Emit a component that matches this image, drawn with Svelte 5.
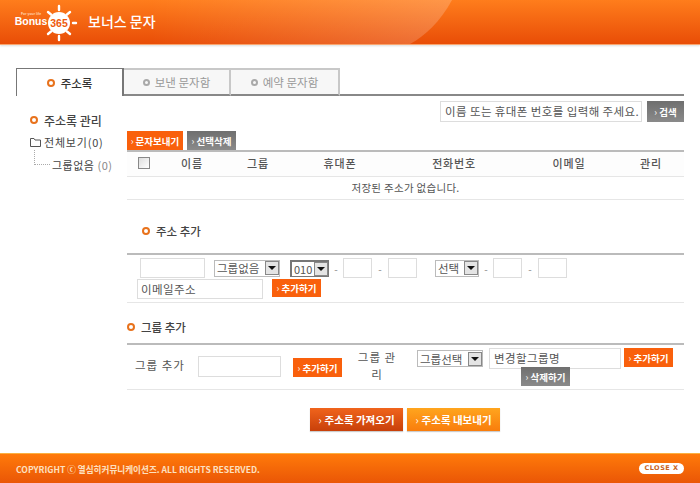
<script>
  const tabs = ['주소록', '보낸 문자함', '예약 문자함'];
  const cols = ['이름', '그룹', '휴대폰', '전화번호', '이메일', '관리'];
</script>

<div class="page">
  <header class="top">
    <svg class="glow" width="460" height="44" viewBox="0 0 460 44">
      <defs>
        <linearGradient id="gl" x1="0" x2="1" y1="0" y2="0">
          <stop offset="0" stop-color="#fff" stop-opacity="0" />
          <stop offset="1" stop-color="#fff" stop-opacity=".2" />
        </linearGradient>
      </defs>
      <path d="M150 0H452C440 22 425 36 410 44H150Z" fill="url(#gl)" />
    </svg>
    <svg class="logo" width="78" height="44" viewBox="0 -1 78 44">
      <g stroke="#fff" stroke-width="2.4" stroke-linecap="round">
        <line x1="59" y1="5" x2="59" y2="9" />
        <line x1="59" y1="35" x2="59" y2="39" />
        <line x1="48" y1="11" x2="51" y2="13.5" />
        <line x1="70" y1="11" x2="67" y2="13.5" />
        <line x1="48" y1="33" x2="51" y2="30.5" />
        <line x1="70" y1="33" x2="67" y2="30.5" />
        <line x1="73" y1="22" x2="76" y2="22" />
      </g>
      <circle cx="59" cy="22" r="11" fill="#fff" />
      <text x="59" y="26" text-anchor="middle" class="l365">365</text>
      <text x="31" y="13.5" text-anchor="middle" class="lfor">For your life</text>
      <text x="31" y="23.5" text-anchor="middle" class="lbonus">Bonus</text>
    </svg>
    <h1>보너스 문자</h1>
  </header>

  <div class="content">
    <nav class="tabs">
      {#each tabs as t, i}
        <div class="tab" class:on={i === 0}><i class="dot"></i>{t}</div>
      {/each}
      <div class="tabline"></div>
    </nav>

    <div class="cols">
      <aside class="side">
        <div class="side-title"><i class="dot"></i>주소록 관리</div>
        <div class="tree-all">
          <svg width="11" height="10" viewBox="0 0 11 10"><path d="M.5 9.5V1.5h3.5l1 1.5h5.500v6.500z" fill="#fff" stroke="#555" /></svg>
          전체보기(0)
        </div>
        <div class="tree-sub"><span class="elbow"></span>그룹없음 <em>(0)</em></div>
      </aside>

      <main class="main">
        <div class="search">
          <div class="input search-in">이름 또는 휴대폰 번호를 입력해 주세요.</div>
          <button class="btn gray search-btn">검색</button>
        </div>

        <div class="actions">
          <button class="btn orange wide">문자보내기</button>
          <button class="btn gray">선택삭제</button>
        </div>

        <div class="list">
          <div class="list-head">
            <span class="chk"></span>
            {#each cols as c}<span>{c}</span>{/each}
          </div>
          <div class="empty">저장된 주소가 없습니다.</div>
        </div>

        <h2 class="sec sec-addr"><i class="dot"></i>주소 추가</h2>
        <div class="addr">
          <div class="addr-row">
            <div class="input name"></div>
            <div class="sel s-group">그룹없음<b></b></div>
            <div class="sel s-010 dark">010<b></b></div>
            <span class="dash">-</span>
            <div class="input num"></div>
            <span class="dash long">-</span>
            <div class="input num"></div>
            <div class="sel s-pick">선택<b></b></div>
            <span class="dash">-</span>
            <div class="input num"></div>
            <span class="dash long">-</span>
            <div class="input num"></div>
          </div>
          <div class="addr-row second">
            <div class="input email">이메일주소</div>
            <button class="btn orange">추가하기</button>
          </div>
        </div>

        <h2 class="sec sec-group"><i class="dot"></i>그룹 추가</h2>
        <div class="group">
          <span class="g-label">그룹 추가</span>
          <div class="input g-name"></div>
          <button class="btn orange g-add">추가하기</button>
          <span class="g-label2">그룹 관리</span>
          <div class="sel s-gsel">그룹선택<b></b></div>
          <div class="g-edit">
            <div class="input g-rename">변경할그룹명</div>
            <button class="btn orange g-add2">추가하기</button>
            <button class="btn gray g-del">삭제하기</button>
          </div>
        </div>

        <div class="bottom">
          <button class="big red">주소록 가져오기</button>
          <button class="big amber">주소록 내보내기</button>
        </div>
      </main>
    </div>
  </div>

  <footer class="foot">
    <span>COPYRIGHT ⓒ 열심히커뮤니케이션즈. ALL RIGHTS RESERVED.</span>
    <button class="close">CLOSE X</button>
  </footer>
</div>

<style>
  :global(body) { margin: 0; background: #fff; }
  .page {
    width: 700px; height: 483px; overflow: hidden;
    display: flex; flex-direction: column;
    font-family: "Noto Sans CJK KR", "Noto Sans", sans-serif;
    font-size: 11px; color: #555;
  }
  button { font-family: inherit; border: 0; padding: 0; cursor: pointer; }

  .top {
    position: relative; overflow: hidden; flex: none;
    height: 45px; display: flex; align-items: center;
    background: linear-gradient(#ff7d1c, #e94d07);
    border-bottom: 1px solid #f9a56e;
    box-shadow: 0 1px 2px #ddd;
    box-sizing: border-box;
  }
  .glow { position: absolute; left: 0; top: 0; }
  .logo { position: relative; flex: none; margin-right: 10px; }
  .l365 { font: 700 10.500px "Liberation Sans", sans-serif; fill: #ee5a0c; }
  .lfor { font: 700 3.500px "Liberation Sans", sans-serif; fill: #ffd7b5; }
  .lbonus { font: 700 10.500px "Liberation Sans", sans-serif; fill: #fff; }
  h1 { position: relative; margin: 0 0 2px; font-size: 14px; font-weight: 500; color: #fff; }

  .content { flex: 1; padding: 23px 16px 0; }
  .tabs { display: flex; height: 28px; }
  .tab {
    width: 107px; box-sizing: border-box; height: 28px; flex: none;
    display: flex; align-items: center; justify-content: center;
    background: #f7f7f7; border: 2px solid #c8c8c8; border-bottom: 2px solid #888; border-left-width: 0;
    color: #999; font-size: 11.500px;
  }
  .tab:nth-child(3) { width: 109px; }
  .tab .dot { border-color: #a9a9a9; width: 3px; height: 3px; margin-right: 5px; }
  .tab.on {
    width: 108px; background: #fff; color: #333; font-weight: 500;
    border: 1px solid #777; border-width: 1px 2px 0 1px;
  }
  .tab.on .dot { border-color: #e8721c; width: 4px; height: 4px; margin-right: 6px; }
  .tabline { flex: 1; border-bottom: 2px solid #888; }

  .dot {
    display: inline-block; box-sizing: content-box; width: 4px; height: 4px;
    border: 2px solid #e8721c; border-radius: 50%; margin-right: 6px; flex: none;
  }

  .cols { display: flex; }
  .side { width: 110px; flex: none; color: #444; }
  .side-title { margin: 15px 0 0 14px; display: flex; align-items: center; font-size: 12px; font-weight: 500; color: #444; height: 18px; }
  .tree-all { margin: 5px 0 0 14px; display: flex; align-items: center; gap: 3px; font-size: 11px; letter-spacing: .8px; height: 16px; }
  .tree-sub { position: relative; margin: 7px 0 0 36px; font-size: 11px; letter-spacing: .5px; height: 16px; line-height: 16px; white-space: nowrap; }
  .tree-sub em { font-style: normal; color: #888; }
  .elbow {
    position: absolute; left: -2px; top: -7px; width: 15px; height: 14px;
    margin-left: -16px;
    border-left: 1px dotted #aaa; border-bottom: 1px dotted #aaa;
  }

  .main { flex: 1; }
  .search { display: flex; justify-content: flex-end; align-items: flex-start; margin-top: 5px; gap: 5px; }
  .input { box-sizing: border-box; height: 21px; border: 1px solid #ddd; background: #fff; line-height: 19px; padding-left: 4px; color: #555; font-size: 11.500px; letter-spacing: .4px; white-space: nowrap; overflow: hidden; }
  .search-in { width: 202px; }
  .btn {
    height: 19px; width: 49px; color: #fff; font-size: 9.500px; font-weight: 700; white-space: nowrap;
    flex: none;
  }
  .btn::before { content: '›'; margin-right: 2px; font-weight: 400; }
  .orange { background: #f9600c; }
  .gray { background: linear-gradient(#6f6f6f, #8a8a8a); }
  .search-btn { width: 37px; height: 21px; }

  .actions { display: flex; gap: 4px; margin: 9px 0 0 1px; }
  .wide { width: 56px; }

  .list { margin-left: 1px; border-top: 2px solid #bbb; }
  .list-head, .empty { border-bottom: 1px solid #e6e6e6; }
  .list-head {
    box-sizing: content-box; height: 21px; padding-bottom: 3px; display: grid; align-items: center; justify-items: center;
    grid-template-columns: 33px 64px 68px 96px 132px 98px 1fr;
    font-weight: 500; font-size: 11px; letter-spacing: .8px; color: #555; background: #fdfdfd;
  }
  .chk { width: 10px; height: 10px; border: 1px solid #888; background: linear-gradient(135deg, #ddd, #fff); }
  .empty { height: 22px; line-height: 21px; text-align: center; font-size: 10.500px; letter-spacing: .3px; color: #555; }

  .sec { display: flex; align-items: center; margin: 0; font-size: 11.500px; font-weight: 500; color: #444; }
  .sec-addr { margin: 22px 0 0 16px; height: 18px; }
  .sec-group { margin: 15px 0 0 1px; height: 18px; }

  .addr { margin-left: 1px; margin-top: 13px; border-top: 2px solid #bbb; border-bottom: 1px solid #e6e6e6; height: 47px; }
  .addr-row { display: flex; align-items: center; height: 20px; padding-top: 3px; padding-left: 13px; }
  .addr-row.second { padding: 1px 0 0 10px; gap: 9px; align-items: flex-start; }
  .name { width: 65px; height: 20px; margin-right: 9px; }
  .num { width: 29px; height: 20px; }
  .email { width: 126px; height: 20px; line-height: 18px; padding-left: 3px; }
  .dash { width: 14px; text-align: center; color: #888; font-size: 10px; flex: none; }
  .dash.long { width: 16px; }
  .addr-row.second .btn { height: 18px; }

  .sel {
    box-sizing: border-box; height: 17px; display: flex; align-items: center; justify-content: space-between;
    border: 1px solid #bbb; background: #fff; padding-left: 2px; line-height: 14px;
    font-size: 11.500px; color: #555; flex: none; white-space: nowrap;
  }
  .sel b {
    position: relative; width: 14px; height: 14px; box-sizing: border-box; flex: none;
    border: 1px solid #888; background: #e4e4e4;
  }
  .sel b::after {
    content: ''; position: absolute; left: 2px; top: 4px;
    border: 4px solid transparent; border-top-color: #111; border-bottom: 0;
  }
  .s-group { width: 66px; margin-right: 10px; }
  .s-010 { width: 39px; font-size: 11px; }
  .dark { border: 1px solid #777; border-top-width: 2px; border-left-width: 2px; }
  .s-pick { width: 44px; margin-left: 18px; }
  .s-gsel { width: 66px; margin: 5px 0 0 20px; }

  .group { display: flex; align-items: flex-start; margin: 7px 0 0 1px; border-top: 2px solid #bbb; border-bottom: 1px solid #e6e6e6; height: 44px; }
  .g-label { width: 71px; margin: 12px 0 0 0; padding-left: 8px; font-size: 11.500px; letter-spacing: 1px; color: #555; box-sizing: border-box; white-space: nowrap; }
  .g-name { width: 83px; margin-top: 11px; }
  .g-add { margin: 13px 0 0 12px; }
  .g-label2 { width: 40px; margin: 4px 0 0 15px; text-align: center; font-size: 11.500px; letter-spacing: 1px; line-height: 17px; color: #555; }
  .g-edit { width: 190px; margin: 3px 0 0 6px; display: flex; flex-wrap: wrap; align-items: flex-start; }
  .g-rename { width: 132px; margin-right: 3px; }
  .g-del { margin: -2px 0 0 32px; position: relative; }

  .bottom { display: flex; justify-content: center; gap: 4px; margin: 18px 0 0; }
  .big { width: 93px; height: 23px; color: #fff; font-size: 10.500px; font-weight: 700; white-space: nowrap; box-shadow: 0 1px 1px #ccc; }
  .big::before { content: '›'; margin-right: 3px; font-weight: 400; }
  .red { background: linear-gradient(#f0641c, #c8400a); }
  .amber { background: linear-gradient(#ffa51e, #f97d0c); }

  .foot {
    flex: none; height: 30px; box-sizing: border-box; padding: 0 16px;
    display: flex; align-items: center; justify-content: space-between;
    background: linear-gradient(#ff7a0a, #ea5606);
    border-top: 1px solid #fbb040;
    color: #fde0c0; font-size: 8.600px; font-weight: 700;
  }
  .close {
    width: 45px; height: 11px; border-radius: 6px; background: #fff;
    color: #c8621c; font: 700 6.500px "DejaVu Sans", sans-serif; letter-spacing: .5px; line-height: 11px;
  }
</style>
